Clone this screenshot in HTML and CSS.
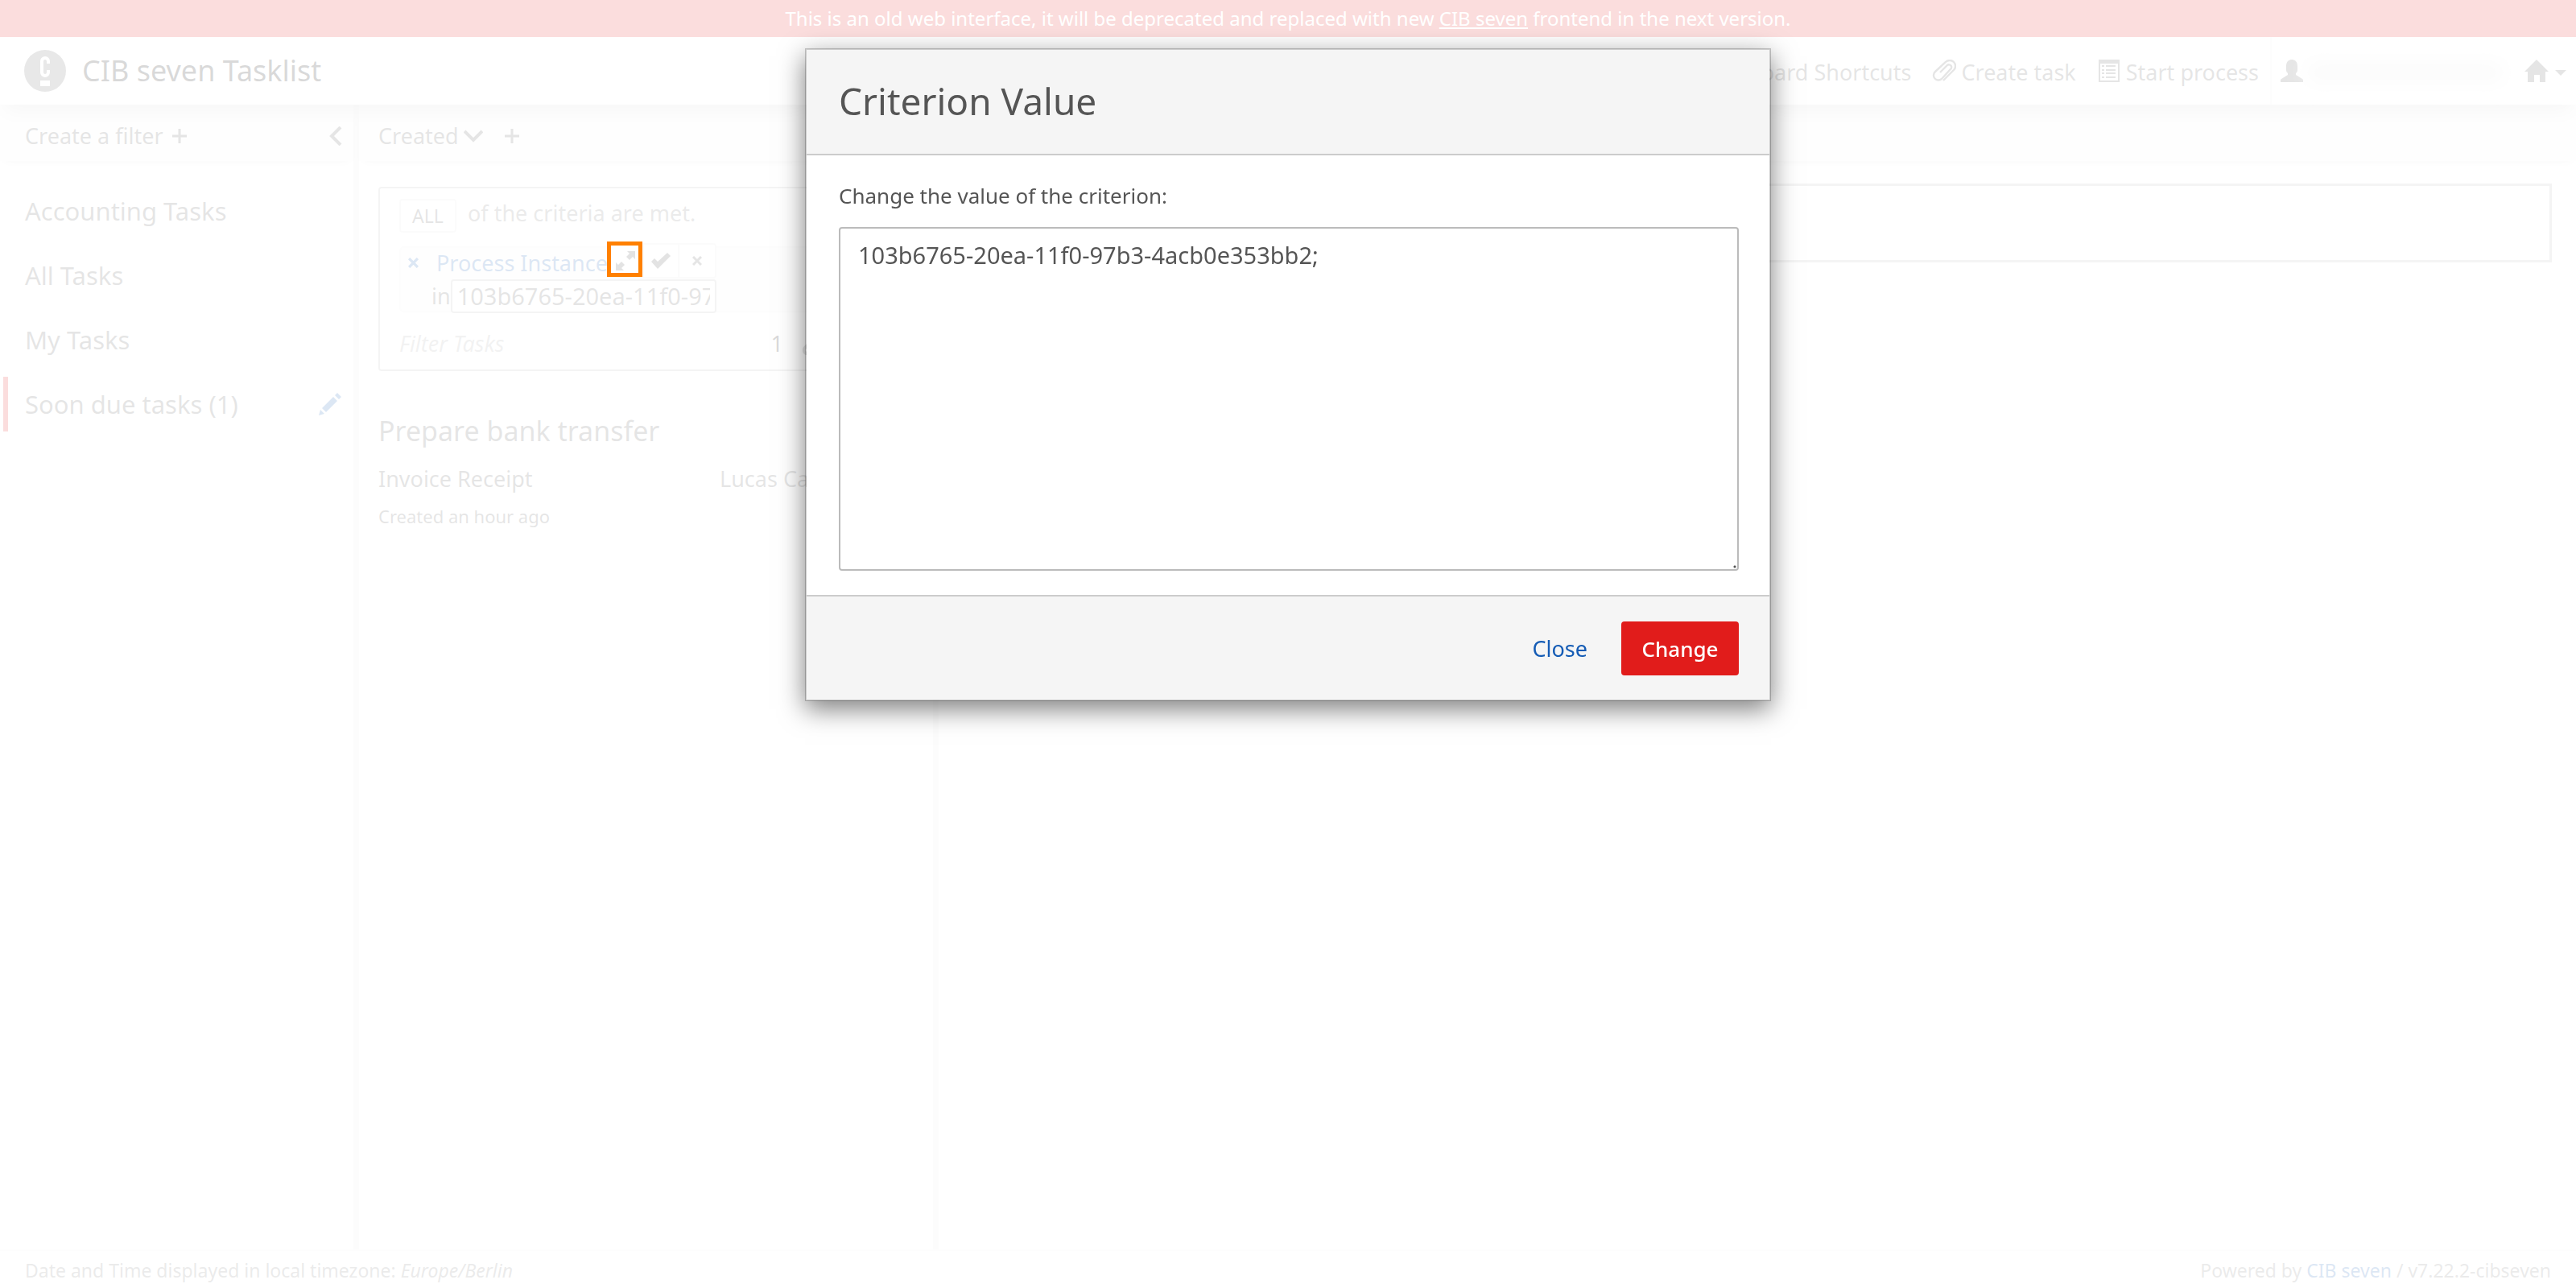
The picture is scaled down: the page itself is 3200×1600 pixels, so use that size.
FILE: index.html
```html
<!DOCTYPE html>
<html lang="en">
<head>
<meta charset="utf-8">
<title>CIB seven Tasklist</title>
<link rel="stylesheet" href="styles.css">
</head>
<body>
<div class="banner">This is an old web interface, it will be deprecated and replaced with new&nbsp;<a href="#">CIB seven</a>&nbsp;frontend in the next version.</div>
<header class="topbar">
  <a class="brand" href="#">
    <svg class="logo" viewBox="0 0 52 52"><circle cx="26" cy="26" r="26" fill="#666"/><path d="M30 17V14a4 4 0 0 0-8 0v14a4 4 0 0 0 8 0v-3" fill="none" stroke="#fff" stroke-width="4"/><path d="M20 38h12v7H20z" fill="#fff"/></svg>
    <span>CIB seven Tasklist</span>
  </a>
  <nav class="menu">
    <a href="#">Keyboard Shortcuts</a>
    <a href="#"><svg class="icon" viewBox="0 0 30 28"><path d="M14 26 27 13a6 6 0 0 0-10-10L4 15a6 6 0 0 0 8 9L23 12a3 3 0 0 0-4-5L10 16" fill="none" stroke="#555" stroke-width="2.400"/></svg>Create task</a>
    <a href="#"><svg class="icon" viewBox="0 0 28 28"><path d="M1 0h26v28H1zM3 5v21h22V5zM5 7h3v2H5zm5 0h12v2H10zM5 12h3v2H5zm5 0h12v2H10zM5 16h3v2H5zm5 0h12v2H10zM5 21h3v2H5zm5 0h12v2H10z" fill="#555" fill-rule="evenodd"/></svg>Start process</a>
    <a class="user" href="#"><svg class="icon" viewBox="0 0 28 28"><path d="M14 0c5 0 7 4 7 8v5c0 2-1 3-2 4v2l8 5 1 1v3H0v-3l1-1 8-5v-2c-1-1-2-2-2-4V8c0-4 2-8 7-8z" fill="#555"/></svg><span class="username"></span></a>
    <a class="home" href="#" aria-label="Home"><svg class="icon" viewBox="0 0 30 28"><path d="M15 0 30 15h-4v13h-7v-9h-7v9H4V15H0z" fill="#555"/></svg><svg class="caret" viewBox="0 0 14 7"><path d="M0 0h14L7 7z" fill="#555"/></svg></a>
  </nav>
</header>
<main class="columns">
  <section class="filters">
    <div class="bar">
      <a href="#">Create a filter <svg class="plus" viewBox="0 0 20 20"><path d="M10 1v18M1 10h18" stroke="#555" stroke-width="3"/></svg></a>
      <a href="#" aria-label="Collapse"><svg class="collapse" viewBox="0 0 16 24"><path d="M14 1 3 12l11 11" fill="none" stroke="#555" stroke-width="4"/></svg></a>
    </div>
    <ul class="filter-list">
      <li><a href="#">Accounting Tasks</a></li>
      <li><a href="#">All Tasks</a></li>
      <li><a href="#">My Tasks</a></li>
      <li class="active"><a href="#">Soon due tasks (1)</a><svg class="icon" viewBox="0 0 28 28"><path d="M0 28l2-7 5 5zM4 19 18 5l5 5L9 24zM20 3l3-3 5 5-3 3z" fill="#155cb5"/></svg></li>
    </ul>
  </section>
  <section class="tasks">
    <div class="bar sorting">
      <a href="#">Created<svg class="chevron" viewBox="0 0 24 16"><path d="m1 2 11 11L23 2" fill="none" stroke="#555" stroke-width="4"/></svg></a>
      <svg class="plus" viewBox="0 0 20 20"><path d="M10 1v18M1 10h18" stroke="#555" stroke-width="3"/></svg>
    </div>
    <div class="search">
      <div class="match"><button class="all">ALL</button><span>of the criteria are met.</span></div>
      <div class="pill">
        <div class="pill-row"><button class="remove" aria-label="Remove"><svg viewBox="0 0 12 12"><path d="m1 1 10 10M11 1 1 11" stroke="#155cb5" stroke-width="3"/></svg></button><a href="#">Process Instance</a></div>
        <div class="pill-row value"><label for="criterion">in</label><input id="criterion" type="text" value="103b6765-20ea-11f0-97b3-4acb0e353bb2;"></div>
        <div class="edit-buttons">
          <button aria-label="Expand"><svg viewBox="0 0 24 24"><path d="M14 0h10v10l-3-3-4 4-4-4 4-4zM0 14l3 3 4-4 4 4-4 4 3 3H0z" fill="#444"/></svg></button>
          <button aria-label="Apply"><svg viewBox="0 0 24 24"><path d="m0 13 4-4 4 4L20 2l4 4L8 22z" fill="#444"/></svg></button>
          <button aria-label="Cancel"><svg class="small" viewBox="0 0 12 12"><path d="m1 1 10 10M11 1 1 11" stroke="#555" stroke-width="3"/></svg></button>
        </div>
      </div>
      <div class="query"><input type="text" placeholder="Filter Tasks" aria-label="Filter Tasks"><span class="count">1</span><svg class="icon" viewBox="0 0 28 28"><path d="m11 17 6-6M9 13l-6 6a4 4 0 0 0 6 6l6-6M13 9l6-6a4 4 0 0 1 6 6l-6 6" fill="none" stroke="#555" stroke-width="4"/></svg></div>
    </div>
    <article class="task">
      <h4>Prepare bank transfer</h4>
      <div class="task-info"><span>Invoice Receipt</span><span>Lucas Ca</span></div>
      <p>Created an hour ago</p>
    </article>
  </section>
  <section class="detail">
    <div class="bar"></div>
    <div class="empty"></div>
  </section>
</main>
<footer class="footer">
  <span>Date and Time displayed in local timezone: <em>Europe/Berlin</em></span>
  <span>Powered by <a href="#">CIB seven</a> / v7.22.2-cibseven</span>
</footer>
<div class="backdrop">
  <div class="dialog" role="dialog" aria-labelledby="dialog-title">
    <h3 id="dialog-title">Criterion Value</h3>
    <div class="dialog-body">
      <label for="value">Change the value of the criterion:</label>
      <textarea id="value" spellcheck="false">103b6765-20ea-11f0-97b3-4acb0e353bb2;</textarea>
    </div>
    <div class="dialog-footer"><button class="close">Close</button><button class="change">Change</button></div>
  </div>
</div>
<div class="marker"></div>
</body>
</html>
```
FILE: styles.css
```css
* { box-sizing: border-box; }
body {
  margin: 0;
  min-height: 100vh;
  display: flex;
  flex-direction: column;
  background: #fff;
  color: #555;
  font: 27px/40px "Noto Sans", "Open Sans", sans-serif;
}
a { color: inherit; text-decoration: none; }
button, input, textarea { font: inherit; color: inherit; }
button { padding: 0; border: 0; background: none; }
svg { display: block; flex: none; }
.icon { width: 28px; height: 28px; }

.banner {
  display: flex;
  justify-content: center;
  height: 46px;
  background: #e11c1b;
  color: #fff;
  font-size: 24px;
  line-height: 46px;
}
.banner a { text-decoration: underline; }

.topbar {
  position: relative;
  z-index: 1;
  display: flex;
  justify-content: space-between;
  height: 84px;
  background: #fff;
  box-shadow: 0 14px 20px -8px rgba(0, 0, 0, .2);
}
.brand { display: flex; align-items: center; gap: 20px; padding-left: 30px; font-size: 36px; color: #000; }
.logo { width: 52px; height: 52px; }
.menu { display: flex; gap: 26px; }
.menu a { display: flex; align-items: center; gap: 6px; padding-top: 4px; }
.menu .icon { width: 30px; height: 28px; margin-bottom: 4px; }
.menu .user { margin-left: -12px; padding-left: 10px; border-left: 2px solid #eee; gap: 4px; }
.menu .home { gap: 8px; padding-right: 12px; }
.username { width: 244px; height: 24px; background: #ddd; filter: blur(12px); }
.caret { width: 14px; height: 7px; }

.columns { flex: 1; display: grid; grid-template-columns: 446px 720px 1fr; }
.bar {
  display: flex;
  justify-content: space-between;
  align-items: center;
  height: 70px;
  padding: 8px 14px 0 31px;
  background: #f5f5f5;
  box-shadow: 0 6px 10px -6px rgba(0, 0, 0, .2);
}
.bar a { display: flex; align-items: center; gap: 10px; }
.plus { width: 20px; height: 20px; }
.collapse { width: 16px; height: 24px; }
.chevron { width: 24px; height: 16px; }
.filters, .tasks { border-right: 7px solid #e8e8e8; }
.filter-list { margin: 22px 0 0; padding: 0; list-style: none; font-size: 31px; }
.filter-list li {
  display: flex;
  align-items: center;
  justify-content: space-between;
  height: 80px;
  padding: 0 15px 0 31px;
}
.filter-list .active { background: linear-gradient(#e11c1b, #e11c1b) 4px center / 6px 68px no-repeat; }

.sorting { justify-content: flex-start; gap: 26px; padding-left: 24px; }
.sorting a { gap: 6px; }
.search { margin: 32px 24px 0; padding: 13px 24px 12px; border: 2px solid #b5b5b5; border-radius: 4px; }
.match { display: flex; gap: 14px; line-height: 36px; }
.match span { color: #777; }
.all { width: 71px; height: 42px; border: 2px solid #e5e5e5; border-radius: 4px; font-size: 23px; line-height: 36px; }
.pill { position: relative; height: 82px; margin: 17px 0 19px; border-radius: 6px; background: #f5f5f5; box-shadow: inset 0 0 0 2px #eee; }
.pill-row { display: flex; align-items: center; gap: 22px; height: 41px; padding-left: 11px; color: #155cb5; }
.pill-row svg { width: 13px; height: 13px; }
.value { gap: 0; padding-left: 40px; color: #555; }
.value input { width: 330px; height: 42px; padding: 0 6px; border: 2px solid #b5b5b5; border-radius: 4px; background: #fff; font-size: 29px; }
.edit-buttons { position: absolute; top: -4px; left: 258px; display: flex; border: 2px solid #e5e5e5; border-radius: 4px; background: #fff; }
.edit-buttons button { display: grid; place-items: center; width: 44px; height: 40px; border-right: 2px solid #e5e5e5; }
.edit-buttons button:last-child { border: 0; }
.edit-buttons svg { width: 24px; height: 24px; }
.edit-buttons .small { width: 12px; height: 12px; }
.query { display: flex; align-items: center; gap: 24px; }
.query input { flex: 1; min-width: 0; height: 40px; padding: 0; border: 0; background: none; }
.query ::placeholder { color: #aaa; font-style: italic; opacity: 1; }
.query .icon { margin-right: 84px; }
.count { color: #000; }
.task { padding: 50px 24px 0; }
.task h4 { margin: 0 0 16px; font-size: 34px; line-height: 48px; font-weight: 400; }
.task-info { display: grid; grid-template-columns: 424px 1fr; }
.task p { margin: 10px 0 0; font-size: 22px; line-height: 32px; }
.empty { height: 98px; margin: 28px 30px 0 24px; border: 3px solid #b5b5b5; }

.footer {
  display: flex;
  justify-content: space-between;
  height: 48px;
  padding: 0 31px;
  border-top: 2px solid #eee;
  font-size: 23px;
  line-height: 48px;
  color: #777;
}
.footer a { color: #155cb5; }

.backdrop {
  position: fixed;
  inset: 0;
  z-index: 2;
  padding-top: 60px;
  background: rgba(255, 255, 255, .85);
}
.dialog {
  width: 1200px;
  max-width: 90%;
  margin: 0 auto;
  border: 2px solid rgba(0, 0, 0, .2);
  background: #fff;
  background-clip: padding-box;
  box-shadow: 0 10px 30px rgba(0, 0, 0, .5);
  font-size: 27px;
}
.dialog h3 { margin: 0; padding: 31px 40px 34px; border-bottom: 2px solid #ccc; background: #f5f5f5; font-size: 46px; line-height: 64px; font-weight: 400; }
.dialog-body { padding: 30px 38px 30px 40px; }
.dialog-body label { display: block; font-size: 26px; }
.dialog-body textarea {
  display: block;
  width: 100%;
  height: 427px;
  margin-top: 19px;
  padding: 13px 22px;
  border: 2px solid #bbb;
  border-radius: 4px;
  font-size: 29px;
}
textarea::-webkit-resizer { background: radial-gradient(circle at 80% 80%, #555 1px, transparent 2px); }
.dialog-footer { display: flex; justify-content: flex-end; gap: 42px; padding: 31px 38px 30px 40px; border-top: 2px solid #ccc; background: #f5f5f5; }
.close { color: #155cb5; }
.change { width: 146px; height: 67px; border-radius: 4px; background: #e11c1b; color: #fff; font-size: 26px; font-weight: 500; }

/* highlight around the expand button, drawn over the backdrop */
.marker { position: absolute; z-index: 3; top: 300px; left: 754px; width: 44px; height: 44px; border: 5px solid #ff8000; }
```
